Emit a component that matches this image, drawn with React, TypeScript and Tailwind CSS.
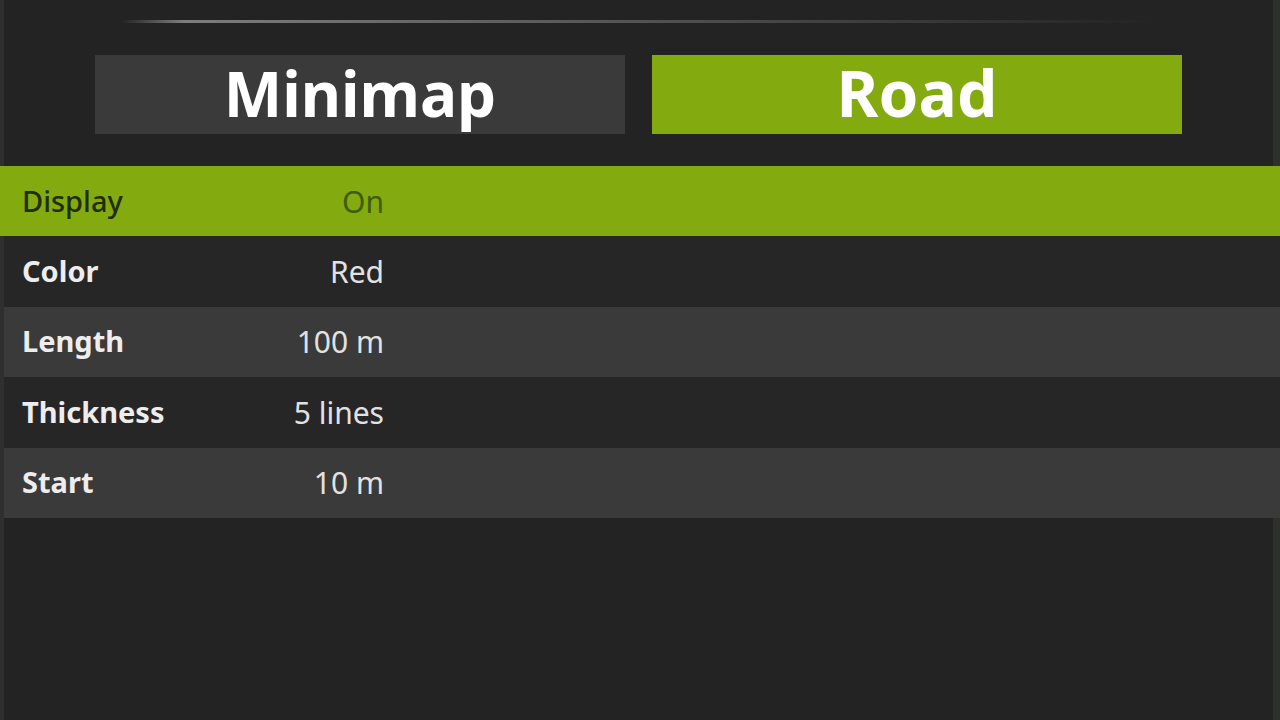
import React from 'react';

type Row = { label: string; value: string };

const rows: Row[] = [
    { label: 'Display', value: 'On' },
    { label: 'Color', value: 'Red' },
    { label: 'Length', value: '100 m' },
    { label: 'Thickness', value: '5 lines' },
    { label: 'Start', value: '10 m' },
];

const App: React.FC = () => {
    const selected = 0;

    return (
        <div className="w-full h-screen bg-[#232323] flex flex-col overflow-hidden font-['Noto_Sans',sans-serif]">
            {/* Header with divider and tabs */}
            <div className="flex flex-col border-l-4 border-l-[#2f2f2f] border-r-[7px] border-r-[#2d302b] pt-5 pb-8">
                <div className="mx-auto w-[1035px] h-[3px] bg-gradient-to-r from-transparent via-[#7d7d7d] via-[6%] to-transparent" />
                <div className="flex justify-center gap-[27px] mt-8">
                    <button className="w-[530px] h-[79px] bg-[#3a3a3a] text-white text-[62px] font-bold leading-none flex items-center justify-center pb-1">
                        Minimap
                    </button>
                    <button className="w-[530px] h-[79px] bg-[#83aa0e] text-white text-[64px] font-bold leading-none flex items-center justify-center pb-1">
                        Road
                    </button>
                </div>
            </div>

            {/* Settings list */}
            <div className="flex flex-col">
                {rows.map((row, i) => {
                    const active = i === selected;
                    const bg = active ? 'bg-[#83aa0e]' : i % 2 === 1 ? 'bg-[#262626] border-l-4 border-l-[#2f2f2f]' : 'bg-[#3a3a3a] border-l-4 border-l-[#2f2f2f]';
                    return (
                        <div key={row.label} className={`h-[70.4px] flex items-center ${bg}`}>
                            <span
                                className={`${active ? 'pl-[22px] w-[384px] text-[#1f2e06] font-medium' : 'pl-[18px] w-[380px] text-[#ededed] font-bold'} text-[29px] flex justify-between`}
                            >
                                <span>{row.label}</span>
                                <span className={`text-[30px] font-normal ${active ? 'text-[#3f5c0a]' : 'text-[#e2e2e2]'}`}>{row.value}</span>
                            </span>
                        </div>
                    );
                })}
            </div>

            {/* Empty panel area */}
            <div className="flex-1 border-l-4 border-l-[#2f2f2f] border-r-[7px] border-r-[#2d302b]" />
        </div>
    );
};

export default App;
